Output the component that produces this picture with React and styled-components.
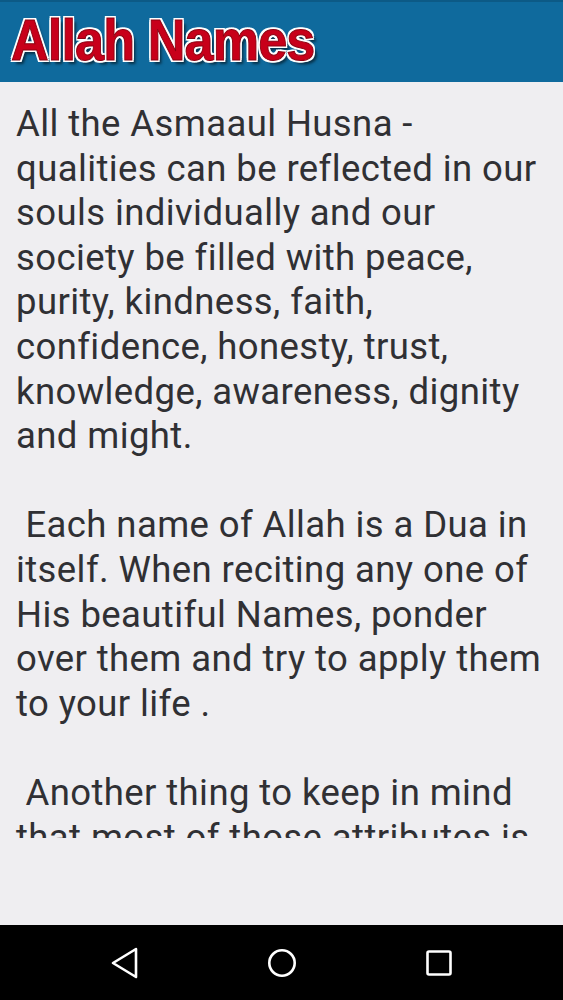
import React from 'react'
import styled, { createGlobalStyle } from 'styled-components'

const Global = createGlobalStyle`
  html, body { margin: 0; padding: 0; }
  body { background: #efeef1; }
`

const Screen = styled.div`
  width: 563px;
  height: 1000px;
  display: flex;
  flex-direction: column;
  background: #efeef1;
  overflow: hidden;
`

const Header = styled.div`
  height: 82px;
  flex: none;
  background: #0f6a9d;
  border-top: 2px solid #0c5a86;
  box-sizing: border-box;
  display: flex;
  align-items: center;
  padding-left: 11px;
`

const Logo = styled.div`
  font-family: 'Liberation Sans', Arial, sans-serif;
  font-weight: bold;
  font-size: 58px;
  line-height: 1;
  color: #c8001a;
  letter-spacing: -1px;
  transform: scaleX(0.9);
  transform-origin: left center;
  white-space: nowrap;
  margin-top: -4px;
  -webkit-text-stroke: 1px #8a0010;
  text-shadow:
    -2px -2px 0 #fff, 2px -2px 0 #fff, -2px 2px 0 #fff, 2px 2px 0 #fff,
    0 -2px 0 #fff, 0 2px 0 #fff, -2px 0 0 #fff, 2px 0 0 #fff,
    4px 4px 3px rgba(0, 0, 0, 0.55);
`

const Scroll = styled.div`
  height: 756px;
  flex: none;
  overflow: hidden;
  padding: 20px 16px 0 16px;
  box-sizing: border-box;
`

const Body = styled.p`
  margin: 0;
  font-family: Roboto, 'Noto Sans', sans-serif;
  font-size: 36.5px;
  line-height: 44.6px;
  letter-spacing: 0.4px;
  color: #303034;
  white-space: pre-wrap;
`

const Spacer = styled.div`
  flex: 1;
`

const NavBar = styled.div`
  height: 75px;
  flex: none;
  background: #000;
  display: flex;
  justify-content: center;
  align-items: center;
  gap: 117px;
`

const NavBtn = styled.div`
  width: 40px;
  height: 40px;
  display: flex;
  align-items: center;
  justify-content: center;
`

const text = `All the Asmaaul Husna - qualities can be reflected in our souls individually and our society be filled with peace, purity, kindness, faith, confidence, honesty, trust, knowledge, awareness, dignity and might.

 Each name of Allah is a Dua in itself. When reciting any one of His beautiful Names, ponder over them and try to apply them to your life .

 Another thing to keep in mind that most of those attributes is found in a human being to a limited degree.`

export default function App() {
  return (
    <Screen>
      <Global />
      <Header>
        <Logo>Allah Names</Logo>
      </Header>
      <Scroll>
        <Body>{text}</Body>
      </Scroll>
      <Spacer />
      <NavBar>
        <NavBtn>
          <svg width="30" height="32" viewBox="0 0 30 32">
            <path d="M26 2 L3 16 L26 30 Z" fill="none" stroke="#fff" strokeWidth="2.6" strokeLinejoin="round" />
          </svg>
        </NavBtn>
        <NavBtn>
          <svg width="30" height="30" viewBox="0 0 30 30">
            <circle cx="15" cy="15" r="12.7" fill="none" stroke="#fff" strokeWidth="2.6" />
          </svg>
        </NavBtn>
        <NavBtn>
          <svg width="28" height="28" viewBox="0 0 28 28">
            <rect x="2.5" y="2.5" width="23" height="23" rx="1.5" fill="none" stroke="#fff" strokeWidth="2.6" />
          </svg>
        </NavBtn>
      </NavBar>
    </Screen>
  )
}
